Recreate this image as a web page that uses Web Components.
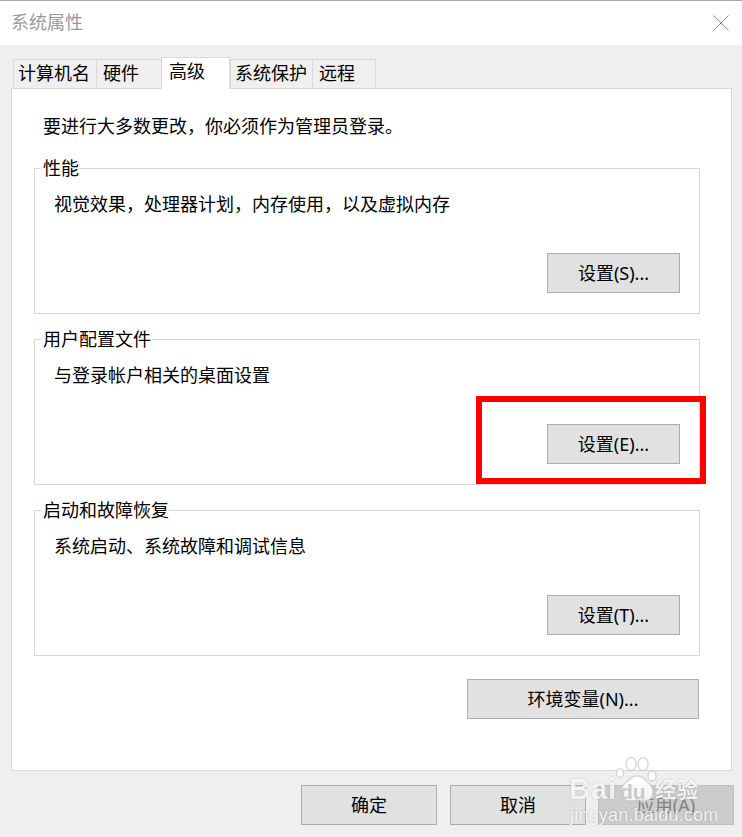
<!DOCTYPE html>
<html lang="zh-CN">
<head>
<meta charset="utf-8">
<title>系统属性</title>
<style>
html, body { margin: 0; padding: 0; background: #efefef; }
body { font: 18px "Noto Sans", "Noto Sans CJK SC", sans-serif; color: #000; }
</style>
</head>
<body>
<system-dialog title-text="系统属性">
  <tab-strip slot="tabs">
    <tab-item w="83" pad="4">计算机名</tab-item>
    <tab-item w="65" pad="6">硬件</tab-item>
    <tab-item w="69" pad="7" active>高级</tab-item>
    <tab-item w="82" pad="4">系统保护</tab-item>
    <tab-item w="64" pad="6">远程</tab-item>
  </tab-strip>
  <div slot="notice">要进行大多数更改，你必须作为管理员登录。</div>
  <group-box slot="groups" label="性能" text="视觉效果，处理器计划，内存使用，以及虚拟内存"><win-button w="133">设置(S)...</win-button></group-box>
  <group-box slot="groups" label="用户配置文件" text="与登录帐户相关的桌面设置"><win-button w="133">设置(E)...</win-button></group-box>
  <group-box slot="groups" label="启动和故障恢复" text="系统启动、系统故障和调试信息"><win-button w="133">设置(T)...</win-button></group-box>
  <win-button slot="env" w="232">环境变量(N)...</win-button>
  <win-button slot="footer" w="136">确定</win-button>
  <win-button slot="footer" w="136">取消</win-button>
  <win-button slot="footer" w="136" style="margin-left:-1px" disabled>应用(A)</win-button>
</system-dialog>
<red-marker></red-marker>
<baidu-mark></baidu-mark>

<script>
class SystemDialog extends HTMLElement {
  constructor() {
    super();
    this.attachShadow({mode: "open"});
  }
  connectedCallback() {
    this.shadowRoot.innerHTML = `<style>
:host { display: flex; flex-direction: column; width: 742px; height: 837px; overflow: hidden; background: #efefef; box-sizing: border-box; border-top: 1px solid #a9a9a9; }
.title { height: 44px; flex: none; background: #fff; display: flex; align-items: center; justify-content: space-between; padding: 0 13px 0 11px; color: #9a9a9a; }
.title span { position: relative; top: -2px; }
.title svg { display: block; }
.body { flex: 1; display: flex; flex-direction: column; padding: 12px 10px 0 11px; }
.panel { height: 683px; flex: none; box-sizing: border-box; background: #fff; border: 1px solid #d9d9d9; padding: 0 31px 0 22px; display: flex; flex-direction: column; }
.notice { height: 79px; flex: none; padding: 22px 0 0 9px; box-sizing: border-box; line-height: 30px; }
.groups { display: flex; flex-direction: column; gap: 25px; }
.env { display: flex; justify-content: flex-end; margin-top: 23px; padding-right: 1px; }
.footer { display: flex; justify-content: flex-end; gap: 13px; margin-top: 14px; margin-right: -2px; }
</style>
<div class="title"><span>${this.getAttribute("title-text")}</span>
<svg width="16" height="16" viewBox="0 0 16 16"><path d="M.5.5l15 15M15.5.5l-15 15" fill="none" stroke="#8a8a8a" stroke-width="1"/></svg></div>
<div class="body">
  <slot name="tabs"></slot>
  <div class="panel">
    <div class="notice"><slot name="notice"></slot></div>
    <div class="groups"><slot name="groups"></slot></div>
    <div class="env"><slot name="env"></slot></div>
  </div>
  <div class="footer"><slot name="footer"></slot></div>
</div>`;
  }
}

class TabStrip extends HTMLElement {
  constructor() {
    super();
    this.attachShadow({mode: "open"}).innerHTML = `<style>
:host { display: flex; align-items: flex-end; height: 32px; padding-left: 2px; margin-bottom: -1px; position: relative; z-index: 1; }
</style><slot></slot>`;
  }
}

class TabItem extends HTMLElement {
  constructor() {
    super();
    this.attachShadow({mode: "open"}).innerHTML = `<style>
:host { display: block; box-sizing: border-box; height: 30px; border: 1px solid #d9d9d9; border-right: 0; background: #efefef; line-height: 27px; white-space: nowrap; }
:host(:last-child) { border-right: 1px solid #d9d9d9; }
:host([active]) { height: 32px; background: #fff; border-bottom: 0; border-right: 1px solid #d9d9d9; }
</style><slot></slot>`;
  }
  connectedCallback() {
    this.style.width = this.getAttribute("w") + "px";
    this.style.paddingLeft = this.getAttribute("pad") + "px";
  }
}

class GroupBox extends HTMLElement {
  constructor() {
    super();
    this.attachShadow({mode: "open"});
  }
  connectedCallback() {
    this.shadowRoot.innerHTML = `<style>
:host { display: block; position: relative; box-sizing: border-box; height: 146px; background: #fff; border: 1px solid #d9d9d9; }
.label { position: absolute; left: 6px; top: -12px; padding-left: 2px; background: #fff; line-height: 22px; }
.inner { height: 100%; box-sizing: border-box; padding: 22px 19px 20px 19px; display: flex; flex-direction: column; justify-content: space-between; }
.text { line-height: 26px; }
.row { display: flex; justify-content: flex-end; }
</style>
<div class="label">${this.getAttribute("label")}</div>
<div class="inner">
  <div class="text">${this.getAttribute("text")}</div>
  <div class="row"><slot></slot></div>
</div>`;
  }
}

class WinButton extends HTMLElement {
  constructor() {
    super();
    this.attachShadow({mode: "open"}).innerHTML = `<style>
:host { display: flex; align-items: center; justify-content: center; box-sizing: border-box; height: 40px; flex: none; background: #e1e1e1; border: 1px solid #adadad; white-space: nowrap; line-height: 26px; }
:host([disabled]) { background: #cccccc; border-color: #bfbfbf; color: #838383; }
</style><slot></slot>`;
  }
  connectedCallback() {
    this.style.width = this.getAttribute("w") + "px";
  }
}

class RedMarker extends HTMLElement {
  constructor() {
    super();
    this.attachShadow({mode: "open"}).innerHTML = `<style>
:host { display: block; position: absolute; left: 476px; top: 396px; width: 230px; height: 88px; box-sizing: border-box; border: 6px solid #ff0000; }
</style>`;
  }
}

class BaiduMark extends HTMLElement {
  constructor() {
    super();
    this.attachShadow({mode: "open"}).innerHTML = `<style>
:host { display: block; position: absolute; left: 568px; top: 755px; width: 174px; height: 72px; color: rgba(255,255,255,.85); font-family: "Liberation Sans", "Noto Sans CJK SC", sans-serif; pointer-events: none; text-shadow: 0 0 2px rgba(0,0,0,.22); }
svg { position: absolute; left: 46px; top: 0; }
.a { position: absolute; left: 1px; top: 19px; font-size: 29px; font-weight: 700; line-height: 30px; letter-spacing: 1px; }
.du { position: absolute; left: 52px; top: 25px; font-size: 21px; font-weight: 700; line-height: 24px; color: #c9c9c9; text-shadow: none; }
.b { position: absolute; left: 87px; top: 19px; font: 700 21px/28px "Noto Sans CJK SC", sans-serif; letter-spacing: 1px; }
.c { position: absolute; left: 2px; top: 49px; font-size: 18px; line-height: 22px; letter-spacing: .2px; }
</style>
<svg width="46" height="50" viewBox="0 0 46 50" fill="rgba(255,255,255,.85)" stroke="rgba(190,190,190,.55)" stroke-width="1.5"><ellipse cx="6" cy="18" rx="3.5" ry="4.5"/><ellipse cx="17" cy="9" rx="5" ry="6.5"/><ellipse cx="29" cy="9" rx="5" ry="6.5"/><ellipse cx="38" cy="21" rx="4" ry="5"/><path d="M23 21c-5 0-8 3-10 6-3 2-6 5-6 10 0 6 4 9 9 9 3 0 5-1 7-1s4 1 7 1c5 0 9-3 9-9 0-5-3-8-6-10-2-3-5-6-10-6z"/></svg>
<div class="a">Bai</div><div class="du">du</div><div class="b">经验</div><div class="c">jingyan.baidu.com</div>`;
  }
}

customElements.define("system-dialog", SystemDialog);
customElements.define("tab-strip", TabStrip);
customElements.define("tab-item", TabItem);
customElements.define("group-box", GroupBox);
customElements.define("win-button", WinButton);
customElements.define("red-marker", RedMarker);
customElements.define("baidu-mark", BaiduMark);
</script>
</body>
</html>
